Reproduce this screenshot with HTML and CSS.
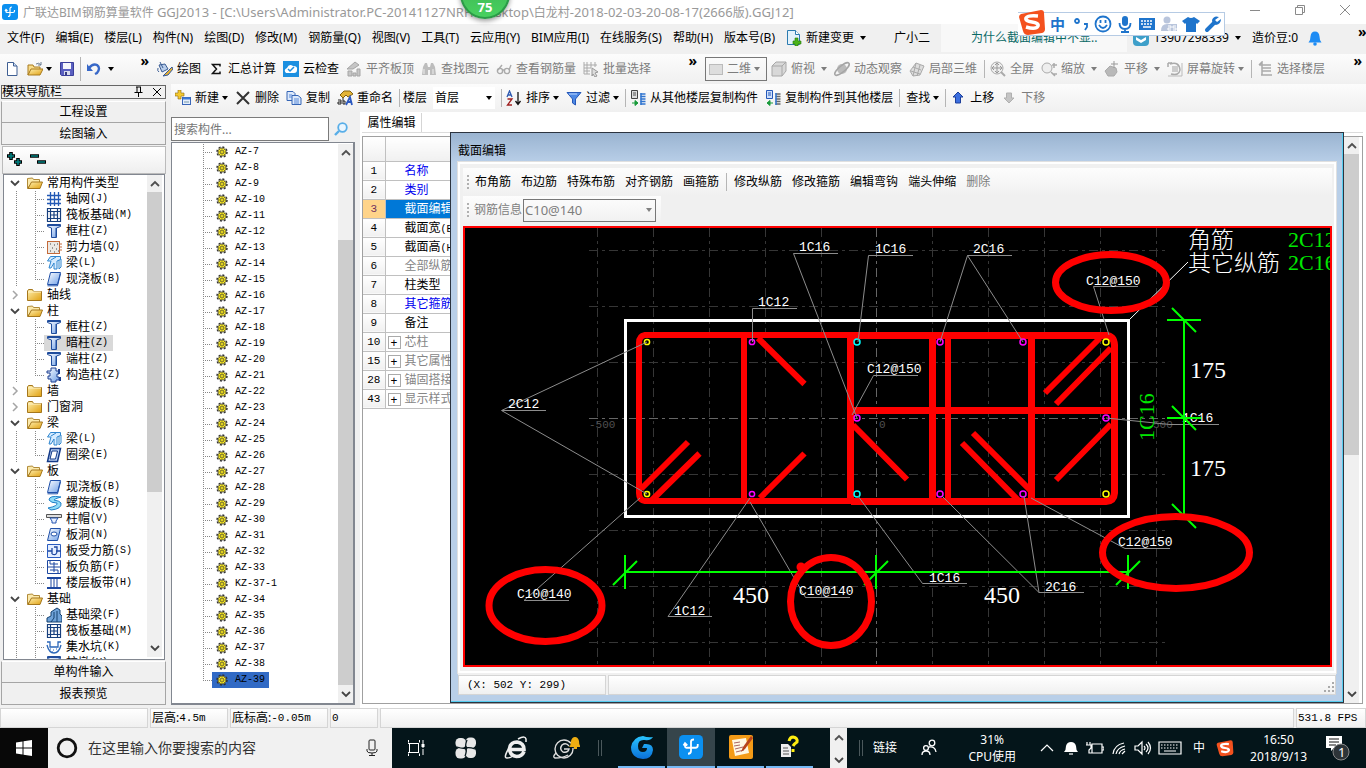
FILE: index.html
```html
<!DOCTYPE html>
<html lang="zh-CN">
<head>
<meta charset="utf-8">
<title>广联达BIM钢筋算量软件 GGJ2013</title>
<link rel="stylesheet" href="styles.css">
</head>
<body>
<svg class="defs" aria-hidden="true">
<defs>
<linearGradient id="gold" x2="1" y2="1"><stop stop-color="#fff0b0"/><stop offset="1" stop-color="#e0a010"/></linearGradient>
<linearGradient id="blue" x2="1" y2="1"><stop stop-color="#fff"/><stop offset="1" stop-color="#6fa0e8"/></linearGradient>
<linearGradient id="flow" x2="0" y2="1"><stop stop-color="#29c5ff"/><stop offset="1" stop-color="#0a6fd8"/></linearGradient>
</defs>
<symbol id="app" viewBox="0 0 16 16"><rect width="16" height="16" rx="3" fill="#0b90f0"/><path d="M8 4v6.500q0 2-2 2M4 6.500v1q0 1 1 1h6q1.500 0 1.500-1.500V6M8 4.500q0-1.500 2-1.500M3 7l1-1.500L5.500 7" fill="none" stroke="#fff" stroke-width="1.200"/></symbol>
<symbol id="page" viewBox="0 0 16 16"><path d="M3.500 1.500h6l3.500 3.500v9.500h-9.500z" fill="#fff" stroke="#3f5f93"/><path d="M9.500 1.500v3.500h3.500" fill="#cfe0f5" stroke="#3f5f93"/></symbol>
<symbol id="open" viewBox="0 0 16 16"><path d="M1 4h5l1 2h6v3H4l-3 5z" fill="#f8dc8a" stroke="#a87b1e"/><path d="M1 14l3-6h12l-3 6z" fill="url(#gold)" stroke="#a87b1e"/><path d="M9 3q3-2 5 1M14 1v3h-3" fill="none" stroke="#6c7f95"/></symbol>
<symbol id="fopen" viewBox="0 0 16 16"><path d="M.5 13.500v-10l5-.5 1 1.500h6v3H5z" fill="#fbe9ab" stroke="#b08a38"/><path d="M1 13.500l3.500-6.500h11l-2.500 6.500z" fill="url(#gold)" stroke="#a5771c"/></symbol>
<symbol id="folder" viewBox="0 0 16 16"><path d="M.5 13.500V4l1-1.500h4l1 2h8v9z" fill="url(#gold)" stroke="#a5771c"/><path d="M1 5h13" stroke="#fff4c8"/></symbol>
<symbol id="save" viewBox="0 0 16 16"><path d="M1.500 1.500h13v13h-12l-1-1z" fill="#5a5fc0" stroke="#3a3f9a"/><path d="M4 2h8v6H4z" fill="#f5f7fc"/><path d="M5 10h6v4H5z" fill="#d8dcee"/><path d="M6 11h2v3H6z" fill="#383c80"/></symbol>
<symbol id="undo" viewBox="0 0 16 16"><path d="M3 7q4-5 8-3 4 3 0 8l-2 1" fill="none" stroke="#3868c8" stroke-width="2.400"/><path d="M1 3v7h6z" fill="#3868c8"/></symbol>
<symbol id="paint" viewBox="0 0 16 16"><path d="M2 4l6-1 3 5-6 3z" fill="#b8cdea" stroke="#3a5c94"/><path d="M3 1l3 6M1 7q-1 3 1 4" stroke="#3a5c94" fill="none"/><path d="M15 6l-6 6-3 3 5-1 5-6z" fill="#e8b030" stroke="#335a9c"/></symbol>
<symbol id="sigma" viewBox="0 0 16 16"><path d="M12 5.500V3.500H4.500l4 4.500-4 4.500H12v-2M4.500 3.500L8.500 8" fill="none" stroke="#111" stroke-width="1.500"/></symbol>
<symbol id="cloud" viewBox="0 0 16 16"><rect width="16" height="16" fill="#1b8fe0"/><path d="M3 12q-3-3 1-5 2-5 6-2 5 0 4 4 0 3-3 3z" fill="#fff"/><path d="M5 8l2 2 4-4" fill="none" stroke="#1b8fe0" stroke-width="1.500"/></symbol>
<symbol id="slab" viewBox="0 0 16 16"><path d="M1 8l8-7 4 3-6 4zM2 10h4v5H2zM7 12h3v3H7zM11 8h3v7h-3z" fill="#c6c6c6" stroke="#a5a5a5"/></symbol>
<symbol id="binoc" viewBox="0 0 16 16"><path d="M2 6l2-4h2l1 4v8H1zM9 6l1-4h2l2 4 1 8H9zM6 6h4v3H6z" fill="#bdbdbd"/><path d="M3 8v5M12 8v5" stroke="#eee"/></symbol>
<symbol id="glasses" viewBox="0 0 16 16"><g fill="none" stroke="#aaa" stroke-width="1.400"><circle cx="4" cy="10" r="2.600"/><circle cx="11" cy="10" r="2.600"/><path d="M2 9l4-5M13 9l2-5M6.500 9h2"/></g></symbol>
<symbol id="batch" viewBox="0 0 16 16"><path d="M1 1v12h6M1 4h13M1 7h7M1 10h6M4 1v12M8 1v6M12 1v5" stroke="#aaa" fill="none"/><path d="M9 7l6 4-3 1 2 3-2 1-2-3-1 2z" fill="#ddd" stroke="#999"/></symbol>
<symbol id="cube" viewBox="0 0 16 16"><path d="M1 5l4-4h10v9l-4 5H1z" fill="#d8d8d8" stroke="#a8a8a8"/><path d="M1 5h10v10M11 5l4-4" fill="none" stroke="#a8a8a8"/></symbol>
<symbol id="orbit" viewBox="0 0 16 16"><circle cx="8" cy="8" r="5" fill="#bbb"/><ellipse cx="8" cy="8" rx="9" ry="3" transform="rotate(-40 8 8)" fill="none" stroke="#a5a5a5" stroke-width="1.500"/></symbol>
<symbol id="local3d" viewBox="0 0 16 16"><path d="M1 10l6-8 8 3-4 9-7 1zM4 6l8 3M7 2l-3 13M11 4L8 15M2 10l9 3" fill="#ddd" stroke="#aaa"/></symbol>
<symbol id="full" viewBox="0 0 16 16"><circle cx="7" cy="7" r="6" fill="#eee" stroke="#aaa"/><path d="M7 2v10M2 7h10M5 4l2-2 2 2M5 10l2 2 2-2M4 5L2 7l2 2M10 5l2 2-2 2" fill="none" stroke="#999"/><path d="M11 11l4 4" stroke="#aaa" stroke-width="2"/></symbol>
<symbol id="zoomi" viewBox="0 0 16 16"><circle cx="6" cy="7" r="5" fill="#eee" stroke="#aaa"/><path d="M10 11l4 4M13 2v5M11 4h5M12 13h4" stroke="#aaa" stroke-width="1.500"/></symbol>
<symbol id="pan" viewBox="0 0 16 16"><path d="M1 10l3-3 2-2 3 1 3 1 1 4-3 4H4z" fill="#b9b9b9" stroke="#aaa"/><path d="M10 0v7M7 3h7" stroke="#999"/></symbol>
<symbol id="rot" viewBox="0 0 16 16"><path d="M1 2h4M1 2v4M3 3q9-3 10 6-1 6-9 4" fill="none" stroke="#aaa" stroke-width="1.500"/><rect x="5" y="5" width="6" height="6" fill="#ccc"/><path d="M1 15h14V2" fill="none" stroke="#bbb"/></symbol>
<symbol id="floors" viewBox="0 0 16 16"><path d="M2 4h12M5 7h9M5 10h9M4 14h11M2 4l3-3v3M5 4v10" stroke="#aaa" stroke-width="1.500" fill="none"/></symbol>
<symbol id="new" viewBox="0 0 16 16"><path d="M3 0h3v3h3v3H6v3H3V6H0V3h3z" fill="#f4c92f" stroke="#8a6a10" stroke-width=".6"/><rect x="7.500" y="7.500" width="8" height="7" fill="#e4eefc" stroke="#3a66b8"/><path d="M8 8.500h7" stroke="#3a78d8" stroke-width="2"/><path d="M9 12h5" stroke="#79a"/></symbol>
<symbol id="del" viewBox="0 0 16 16"><path d="M2 2l12 12M14 2L2 14" stroke="#333" stroke-width="2"/></symbol>
<symbol id="copy" viewBox="0 0 16 16"><path d="M1 1.500h6l2 2v7H1z" fill="#dce9fb" stroke="#3565b5"/><path d="M6 5.500h6l3 2.500v6.500H6z" fill="#dce9fb" stroke="#3565b5"/><path d="M8 9h5M8 11h5M8 13h5M3 5h3M3 7h3" stroke="#5b8ad8"/></symbol>
<symbol id="rename" viewBox="0 0 16 16"><path d="M3 5l4-4h6l3 3-5 3-2-2-3 3z" fill="#e3b436" stroke="#836211"/><path d="M1 10h3v4H1v-2h3M6 8v6h2v-3H6" fill="none" stroke="#222"/><path d="M9 15l4-8 2 8M11 12h4" fill="none" stroke="#2d59c0" stroke-width="1.800"/></symbol>
<symbol id="sort" viewBox="0 0 16 16"><path d="M1 7l2.500-6L6 7M2 5h3" fill="none" stroke="#2d59b0" stroke-width="1.300"/><path d="M1.500 9H6l-4.500 6H6" fill="none" stroke="#a02020" stroke-width="1.300"/><path d="M12 2v12M9.500 11l2.500 3.500L14.500 11" fill="none" stroke="#111" stroke-width="1.300"/></symbol>
<symbol id="filter" viewBox="0 0 16 16"><path d="M1 2.500h14L9.500 9v6l-3-2V9z" fill="#4d88e4" stroke="#2557b8"/><path d="M3 4h8" stroke="#bcd6ff"/></symbol>
<symbol id="cpfrom" viewBox="0 0 16 16"><path d="M1.500.5h6v8h-6z" fill="#ddd" stroke="#444"/><path d="M3 3h3M3 5h3" stroke="#555"/><path d="M2 13h5M5 10.500v5l3-2.500z" fill="#199a3a" stroke="#199a3a"/><path d="M10.500 4h5M10.500 6.500h5M10.500 9h5M10.500 11.500h5M10.500 14h5" stroke="#2f74cf" stroke-width="1.600"/><path d="M11 3v12" stroke="#2f74cf" stroke-width="1.500"/></symbol>
<symbol id="cpto" viewBox="0 0 16 16"><path d="M1.500.5h6v8h-6z" fill="#cfe0fb" stroke="#2558b8"/><path d="M3 3h3M3 5h3" stroke="#2558b8"/><path d="M3 13h5M5 10.500v5L2 13z" fill="#199a3a" stroke="#199a3a"/><path d="M10.500 4h5M10.500 6.500h5M10.500 9h5M10.500 11.500h5M10.500 14h5" stroke="#666" stroke-width="1.600"/><path d="M11 3v12" stroke="#2f74cf" stroke-width="1.500"/></symbol>
<symbol id="up" viewBox="0 0 16 16"><path d="M8 2l5 5h-2.500v6h-5V7H3z" fill="#3c6fe0" stroke="#1d3f9a"/></symbol>
<symbol id="down" viewBox="0 0 16 16"><path d="M8 13L3 8h2.500V3h5v5H13z" fill="#c4c4c4" stroke="#b0b0b0"/></symbol>
<symbol id="chg" viewBox="0 0 16 16"><path d="M1.500.5h8l4 4v10h-12z" fill="#e3f2fb" stroke="#2b7bb0"/><path d="M9.500.5v4h4" fill="#fff" stroke="#2b7bb0"/><path d="M9 8h3v3h3v3h-3v2H9v-2H7v-3h2z" fill="#4bb31b" stroke="#257a0c" stroke-width=".6"/></symbol>
<symbol id="bell" viewBox="0 0 16 16"><path d="M1.500 12.500q2-2 2-6Q4 1.500 8 1.500t4.500 5q0 4 2 6z" fill="#1e8cf4"/><circle cx="8" cy="14" r="1.800" fill="#1e8cf4"/></symbol>
<symbol id="mag" viewBox="0 0 16 16"><circle cx="9.500" cy="6.500" r="4.300" fill="#eaf6ff" stroke="#58aee8" stroke-width="1.800"/><path d="M6 10l-4 4" stroke="#58aee8" stroke-width="2.400"/></symbol>
<symbol id="cdown" viewBox="0 0 12 12"><path d="M2 4l4 4 4-4" fill="none" stroke="#444" stroke-width="1.800"/></symbol>
<symbol id="cright" viewBox="0 0 12 12"><path d="M4 2l4 4-4 4" fill="none" stroke="#a5a5a5" stroke-width="1.500"/></symbol>
<symbol id="cup" viewBox="0 0 12 12"><path d="M2 8l4-4 4 4" fill="none" stroke="#505050" stroke-width="1.800"/></symbol>
<symbol id="grid" viewBox="0 0 16 16"><path d="M4.500 1v14M8.500 1v14M12.500 1v14M1 4.500h14M1 8.500h14M1 12.500h14" stroke="#2359b5" stroke-width="1.300"/></symbol>
<symbol id="raft" viewBox="0 0 16 16"><path d="M1.500 1.500h13v13h-13zM4.500 2v12M11.500 2v12M2 4.500h12M2 11.500h12M8 5v6M5 8h6" fill="none" stroke="#173f7d" stroke-width="1.200"/></symbol>
<symbol id="col" viewBox="0 0 16 16"><path d="M1.500 1.500h13v2l-4 1.500v9.500h-5V5l-4-1.500z" fill="url(#blue)" stroke="#1f4c9c"/><path d="M2 2.500h12M10 5v9" stroke="#1f4c9c"/></symbol>
<symbol id="wall" viewBox="0 0 16 16"><rect x="1.500" y="2.500" width="12" height="12" fill="#ece9e4" stroke="#c46a3a"/><path d="M4 5h1M8 6h1M6 9h1M10 10h1M4 12h1M8 13h1M11 5h1M12 12h1" stroke="#444"/><path d="M13 5h3M13 8h3M13 11h3" stroke="#c46a3a"/></symbol>
<symbol id="beam" viewBox="0 0 16 16"><path d="M1.500 6l3-4.500h10v3L11 6v8H8V8l-3 5H3l2-7z" fill="#d5ebff" stroke="#2f86cf"/><path d="M5 5l5-3M13 5v9l2-2V4" fill="none" stroke="#2f86cf"/></symbol>
<symbol id="plate" viewBox="0 0 16 16"><path d="M4.500 1.500h10l-3 12h-10z" fill="url(#blue)" stroke="#2050a8"/><path d="M1.500 14.800h10l3-12" fill="none" stroke="#2050a8"/></symbol>
<symbol id="ring" viewBox="0 0 16 16"><path d="M4.500 1.500h10l-3 13h-10z" fill="#bcd3f5" stroke="#143a88" stroke-width="1.500"/><path d="M6 4h5.500l-2 8H4z" fill="#fff" stroke="#143a88"/></symbol>
<symbol id="gz" viewBox="0 0 16 16"><path d="M5 1h5v3h3v3h-2v3h2v3h-3v2H5v-3H2v-3h2V6H1V4h4z" fill="url(#blue)" stroke="#1c3f90"/><path d="M13 2v5M14 10v4" stroke="#1c3f90" stroke-width="2"/></symbol>
<symbol id="spiral" viewBox="0 0 16 16"><path d="M15 2Q3 0 3 5q2 3 8 3 1 3-9 5l3 2q11-1 10-7-1-2-7-3 0-1 7-3z" fill="#8fdcf8" stroke="#2080c8"/></symbol>
<symbol id="cap" viewBox="0 0 16 16"><path d="M.5 3.500h15v3H.5z" fill="#ddd" stroke="#555"/><path d="M4 7h8l-2 3v2H6v-2z" fill="#e8f0ff" stroke="#2454b0"/></symbol>
<symbol id="hole" viewBox="0 0 16 16"><path d="M4.500 1.500h10l-3 12h-10z" fill="url(#blue)" stroke="#2050a8"/><ellipse cx="8" cy="7" rx="3" ry="2" fill="#fff" stroke="#2050a8"/></symbol>
<symbol id="force" viewBox="0 0 16 16"><path d="M1.500 1.500h13v13h-13z" fill="#e5efff" stroke="#2a5cc0"/><path d="M2 8h4M10 8h5M6 5v6M6 11q5 2 5-3V4H8" fill="none" stroke="#1d47a0" stroke-width="1.300"/></symbol>
<symbol id="neg" viewBox="0 0 16 16"><path d="M1.500 1.500h13v13h-13z" fill="#fff" stroke="#1d47a0"/><path d="M4 5V2M4 5h8M2 8h12M4 11h8v3M8 3v10" stroke="#1d47a0" fill="none"/></symbol>
<symbol id="band" viewBox="0 0 16 16"><path d="M1 3h14M1 13h14" stroke="#1d47a0" stroke-width="2"/><path d="M5 3v10M11 3v10M8 4v8" stroke="#1d47a0"/></symbol>
<symbol id="fbeam" viewBox="0 0 16 16"><path d="M1 15V11l4-2V5l6-4 3 2v4l2 2v6zM8 5v6l-3 4M11 4v11" fill="#6fa2d8" stroke="#14406f"/></symbol>
<symbol id="pit" viewBox="0 0 16 16"><path d="M1 3h3v5h8V3h3M1 6q2 8 7 8t7-8" fill="none" stroke="#2a66b8" stroke-width="1.300"/><path d="M4 10h1M7 11h1M10 10h1M6 13h1" stroke="#2a66b8"/></symbol>
<symbol id="gear" viewBox="0 0 12 12"><circle cx="6" cy="6" r="5" fill="none" stroke="#333" stroke-width="1.500" stroke-dasharray="2 1.900"/><circle cx="6" cy="6" r="4" fill="#ffee20" stroke="#333" stroke-width=".5"/><path d="M6 1v10M1 6h10M2.500 2.500l7 7M9.500 2.500l-7 7" stroke="#333" stroke-width=".5"/><circle cx="6" cy="6" r="1.500" fill="#ffee20" stroke="#333" stroke-width=".5"/></symbol>
<symbol id="sogou" viewBox="0 0 28 28"><path d="M3 6l20-4q3 0 3 3l1 16q0 3-3 4l-14 2q-4 0-5-4L1 9q0-2 2-3z" fill="#f4511e"/><path d="M20 8q-10-1-12 2-1 3 6 4 7 1 6 4-2 4-12 1" fill="none" stroke="#fff" stroke-width="3.500"/></symbol>
</svg>

<header class="titlebar">
  <svg class="ic"><use href="#app"/></svg>
  <h1>广联达BIM钢筋算量软件 <span>GGJ2013 - [C:\Users\Administrator.PC-20141127NRH\Desktop\</span>白龙村<span>-2018-02-03-20-08-17(2666</span>版<span>).GGJ12]</span></h1>
  <div class="winbtns">
    <button aria-label="最小化"><svg viewBox="0 0 12 12"><path d="M1 6.500h10"/></svg></button>
    <button aria-label="还原"><svg viewBox="0 0 12 12"><path d="M1.500 3.500h7v7h-7zM3.500 3v-1.500h7v7H9"/></svg></button>
    <button aria-label="关闭"><svg viewBox="0 0 12 12"><path d="M1 1l10 10M11 1L1 11"/></svg></button>
  </div>
</header>

<nav class="menubar">
  <button>文件(F)</button><button>编辑(E)</button><button>楼层(L)</button><button>构件(N)</button><button>绘图(D)</button><button>修改(M)</button><button>钢筋量(Q)</button><button>视图(V)</button><button>工具(T)</button><button>云应用(Y)</button><button>BIM应用(I)</button><button>在线服务(S)</button><button>帮助(H)</button><button>版本号(B)</button>
  <button class="change"><svg class="ic"><use href="#chg"/></svg>新建变更<i class="caret"></i></button>
  <button class="user">广小二</button>
  <a class="tip" href="#">为什么截面编辑中不显..</a>
  <button class="phone"><svg class="ic" viewBox="0 0 16 16"><rect width="16" height="16" rx="4" fill="#3e9fc9"/><path d="M3 10l5 3 5-3V7L8 10 3 7z" fill="#fff"/></svg>13907298339<i class="caret"></i></button>
  <button>造价豆:0</button>
  <svg class="ic bell"><use href="#bell"/></svg>
  <span class="more">»</span>
</nav>

<div class="toolbar top">
  <div class="grp files">
    <button aria-label="新建"><svg class="ic"><use href="#page"/></svg></button>
    <button aria-label="打开"><svg class="ic"><use href="#open"/></svg><i class="caret"></i></button>
    <button aria-label="保存"><svg class="ic"><use href="#save"/></svg></button>
    <i class="sep"></i>
    <button aria-label="撤销"><svg class="ic"><use href="#undo"/></svg><i class="caret wide"></i></button>
    <span class="more">»</span>
  </div>
  <div class="grp draw">
    <button><svg class="ic"><use href="#paint"/></svg>绘图</button>
    <button><svg class="ic"><use href="#sigma"/></svg>汇总计算</button>
    <button><svg class="ic"><use href="#cloud"/></svg>云检查</button>
    <button disabled><svg class="ic"><use href="#slab"/></svg>平齐板顶</button>
    <button disabled><svg class="ic"><use href="#binoc"/></svg>查找图元</button>
    <button disabled><svg class="ic"><use href="#glasses"/></svg>查看钢筋量</button>
    <button disabled><svg class="ic"><use href="#batch"/></svg>批量选择</button>
    <span class="more">»</span>
  </div>
  <div class="grp view">
    <button class="combo" disabled><i class="swatch"></i>二维<i class="caret"></i></button>
    <button disabled><svg class="ic"><use href="#cube"/></svg>俯视<i class="caret wide"></i></button>
    <button disabled><svg class="ic"><use href="#orbit"/></svg>动态观察</button>
    <button disabled><svg class="ic"><use href="#local3d"/></svg>局部三维</button>
    <i class="sep"></i>
    <button disabled><svg class="ic"><use href="#full"/></svg>全屏</button>
    <button disabled><svg class="ic"><use href="#zoomi"/></svg>缩放<i class="caret wide"></i></button>
    <button disabled><svg class="ic"><use href="#pan"/></svg>平移<i class="caret wide"></i></button>
    <button disabled><svg class="ic"><use href="#rot"/></svg>屏幕旋转<i class="caret"></i></button>
    <i class="sep"></i>
    <button disabled><svg class="ic"><use href="#floors"/></svg>选择楼层</button>
    <span class="more">»</span>
  </div>
</div>

<main class="work">
  <aside class="modnav">
    <div class="modtitle">模块导航栏
      <svg viewBox="0 0 36 12"><path d="M7 1h5M8 1v5M11.500 1v5M5.500 6.500h8M9.500 7v4M24 2l8 8M32 2l-8 8" fill="none" stroke="#000"/></svg>
    </div>
    <button class="bar">工程设置</button>
    <button class="bar">绘图输入</button>
    <div class="expand"><svg viewBox="0 0 46 20"><path d="M8 3v8M4 7h8M15 9v8M11 13h8M27 7h9M34 13h9" stroke="#000" stroke-width="3.600"/><path d="M8 4v6M5 7h6M15 10v6M12 13h6M28 7h7M35 13h7" stroke="#008080" stroke-width="1.600"/></svg></div>
    <div class="box treebox">
      <ul class="tree">
        <li class="top"><svg class="ch"><use href="#cdown"/></svg><svg class="ic"><use href="#fopen"/></svg>常用构件类型</li>
        <li><svg class="ic"><use href="#grid"/></svg>轴网<small>(J)</small></li>
        <li><svg class="ic"><use href="#raft"/></svg>筏板基础<small>(M)</small></li>
        <li><svg class="ic"><use href="#col"/></svg>框柱<small>(Z)</small></li>
        <li><svg class="ic"><use href="#wall"/></svg>剪力墙<small>(Q)</small></li>
        <li><svg class="ic"><use href="#beam"/></svg>梁<small>(L)</small></li>
        <li class="last"><svg class="ic"><use href="#plate"/></svg>现浇板<small>(B)</small></li>
        <li class="top"><svg class="ch"><use href="#cright"/></svg><svg class="ic"><use href="#folder"/></svg>轴线</li>
        <li class="top"><svg class="ch"><use href="#cdown"/></svg><svg class="ic"><use href="#fopen"/></svg>柱</li>
        <li><svg class="ic"><use href="#col"/></svg>框柱<small>(Z)</small></li>
        <li><span class="cur"><svg class="ic"><use href="#col"/></svg>暗柱<small>(Z)</small></span></li>
        <li><svg class="ic"><use href="#col"/></svg>端柱<small>(Z)</small></li>
        <li class="last"><svg class="ic"><use href="#gz"/></svg>构造柱<small>(Z)</small></li>
        <li class="top"><svg class="ch"><use href="#cright"/></svg><svg class="ic"><use href="#folder"/></svg>墙</li>
        <li class="top"><svg class="ch"><use href="#cright"/></svg><svg class="ic"><use href="#folder"/></svg>门窗洞</li>
        <li class="top"><svg class="ch"><use href="#cdown"/></svg><svg class="ic"><use href="#fopen"/></svg>梁</li>
        <li><svg class="ic"><use href="#beam"/></svg>梁<small>(L)</small></li>
        <li class="last"><svg class="ic"><use href="#ring"/></svg>圈梁<small>(E)</small></li>
        <li class="top"><svg class="ch"><use href="#cdown"/></svg><svg class="ic"><use href="#fopen"/></svg>板</li>
        <li><svg class="ic"><use href="#plate"/></svg>现浇板<small>(B)</small></li>
        <li><svg class="ic"><use href="#spiral"/></svg>螺旋板<small>(B)</small></li>
        <li><svg class="ic"><use href="#cap"/></svg>柱帽<small>(V)</small></li>
        <li><svg class="ic"><use href="#hole"/></svg>板洞<small>(N)</small></li>
        <li><svg class="ic"><use href="#force"/></svg>板受力筋<small>(S)</small></li>
        <li><svg class="ic"><use href="#neg"/></svg>板负筋<small>(F)</small></li>
        <li class="last"><svg class="ic"><use href="#band"/></svg>楼层板带<small>(H)</small></li>
        <li class="top"><svg class="ch"><use href="#cdown"/></svg><svg class="ic"><use href="#fopen"/></svg>基础</li>
        <li><svg class="ic"><use href="#fbeam"/></svg>基础梁<small>(F)</small></li>
        <li><svg class="ic"><use href="#raft"/></svg>筏板基础<small>(M)</small></li>
        <li><svg class="ic"><use href="#pit"/></svg>集水坑<small>(K)</small></li>
        <li><svg class="ic"><use href="#col"/></svg>柱墩<small>(Y)</small></li>
      </ul>
      <div class="scroll"><svg class="ch"><use href="#cup"/></svg><i class="thumb nav"></i><svg class="ch"><use href="#cdown"/></svg></div>
    </div>
    <button class="bar">单构件输入</button>
    <button class="bar">报表预览</button>
  </aside>

  <section class="right">
    <div class="toolbar second">
      <button><svg class="ic"><use href="#new"/></svg>新建<i class="caret"></i></button>
      <button><svg class="ic"><use href="#del"/></svg>删除</button>
      <button><svg class="ic"><use href="#copy"/></svg>复制</button>
      <button><svg class="ic"><use href="#rename"/></svg>重命名</button>
      <i class="sep"></i>
      <label for="floor">楼层</label>
      <span class="pick"><select id="floor"><option>首层</option></select><i class="caret"></i></span>
      <i class="sep"></i>
      <button><svg class="ic"><use href="#sort"/></svg>排序<i class="caret"></i></button>
      <button><svg class="ic"><use href="#filter"/></svg>过滤<i class="caret"></i></button>
      <i class="sep"></i>
      <button><svg class="ic"><use href="#cpfrom"/></svg>从其他楼层复制构件</button>
      <button><svg class="ic"><use href="#cpto"/></svg>复制构件到其他楼层</button>
      <i class="sep"></i>
      <button class="find">查找<i class="caret"></i></button>
      <i class="sep"></i>
      <button><svg class="ic"><use href="#up"/></svg>上移</button>
      <button disabled><svg class="ic"><use href="#down"/></svg>下移</button>
    </div>

    <div class="content">
      <section class="comps">
        <div class="search"><input type="text" placeholder="搜索构件..." aria-label="搜索构件"><button aria-label="搜索"><svg class="ic"><use href="#mag"/></svg></button></div>
        <div class="box listbox">
          <ul class="list">
            <li><svg><use href="#gear"/></svg>AZ-7</li><li><svg><use href="#gear"/></svg>AZ-8</li><li><svg><use href="#gear"/></svg>AZ-9</li><li><svg><use href="#gear"/></svg>AZ-10</li>
            <li><svg><use href="#gear"/></svg>AZ-11</li><li><svg><use href="#gear"/></svg>AZ-12</li><li><svg><use href="#gear"/></svg>AZ-13</li><li><svg><use href="#gear"/></svg>AZ-14</li>
            <li><svg><use href="#gear"/></svg>AZ-15</li><li><svg><use href="#gear"/></svg>AZ-16</li><li><svg><use href="#gear"/></svg>AZ-17</li><li><svg><use href="#gear"/></svg>AZ-18</li>
            <li><svg><use href="#gear"/></svg>AZ-19</li><li><svg><use href="#gear"/></svg>AZ-20</li><li><svg><use href="#gear"/></svg>AZ-21</li><li><svg><use href="#gear"/></svg>AZ-22</li>
            <li><svg><use href="#gear"/></svg>AZ-23</li><li><svg><use href="#gear"/></svg>AZ-24</li><li><svg><use href="#gear"/></svg>AZ-25</li><li><svg><use href="#gear"/></svg>AZ-26</li>
            <li><svg><use href="#gear"/></svg>AZ-27</li><li><svg><use href="#gear"/></svg>AZ-28</li><li><svg><use href="#gear"/></svg>AZ-29</li><li><svg><use href="#gear"/></svg>AZ-30</li>
            <li><svg><use href="#gear"/></svg>AZ-31</li><li><svg><use href="#gear"/></svg>AZ-32</li><li><svg><use href="#gear"/></svg>AZ-33</li><li><svg><use href="#gear"/></svg>KZ-37-1</li>
            <li><svg><use href="#gear"/></svg>AZ-34</li><li><svg><use href="#gear"/></svg>AZ-35</li><li><svg><use href="#gear"/></svg>AZ-36</li><li><svg><use href="#gear"/></svg>AZ-37</li>
            <li><svg><use href="#gear"/></svg>AZ-38</li><li class="last"><span class="sel"><svg><use href="#gear"/></svg>AZ-39</span></li>
          </ul>
          <div class="scroll"><svg class="ch"><use href="#cup"/></svg><i class="thumb tall"></i><svg class="ch"><use href="#cdown"/></svg></div>
        </div>
      </section>

      <section class="props">
        <div class="tabs"><button class="tab">属性编辑</button></div>
        <div class="propbox">
          <table>
            <thead><tr><th></th><th></th></tr></thead>
            <tbody>
              <tr><th>1</th><td class="b">名称</td></tr>
              <tr><th>2</th><td class="b">类别</td></tr>
              <tr class="on"><th>3</th><td>截面编辑</td></tr>
              <tr><th>4</th><td>截面宽<small>(B边)</small></td></tr>
              <tr><th>5</th><td>截面高<small>(H边)</small></td></tr>
              <tr><th>6</th><td class="g">全部纵筋</td></tr>
              <tr><th>7</th><td>柱类型</td></tr>
              <tr><th>8</th><td class="b">其它箍筋</td></tr>
              <tr><th>9</th><td>备注</td></tr>
              <tr class="fold"><th>10</th><td class="g"><button>+</button>芯柱</td></tr>
              <tr class="fold"><th>15</th><td class="g"><button>+</button>其它属性</td></tr>
              <tr class="fold"><th>28</th><td class="g"><button>+</button>锚固搭接</td></tr>
              <tr class="fold"><th>43</th><td class="g"><button>+</button>显示样式</td></tr>
            </tbody>
          </table>
          <div class="scroll"><svg class="ch"><use href="#cup"/></svg><i class="thumb prop"></i><svg class="ch"><use href="#cdown"/></svg></div>
        </div>

        <div class="dialog" role="dialog" aria-label="截面编辑">
          <h2>截面编辑</h2>
          <div class="inner">
            <div class="dbar"><i class="grip"></i>
              <button>布角筋</button><button>布边筋</button><button>特殊布筋</button><button>对齐钢筋</button><button>画箍筋</button><i class="sep"></i><button>修改纵筋</button><button>修改箍筋</button><button>编辑弯钩</button><button>端头伸缩</button><button disabled>删除</button>
            </div>
            <div class="dbar info"><i class="grip"></i>
              <label for="rebar">钢筋信息</label><span class="pick"><select id="rebar" disabled><option>C10@140</option></select><i class="caret"></i></span>
            </div>
            <svg class="canvas" aria-label="截面图">
              <g transform="translate(-465 -228)" fill="none">
                <g stroke="#363636" stroke-dasharray="9 4 3 4">
                  <path d="M597.500 228V668M653.500 228V668M709.500 228V668M765.500 228V668M821.500 228V668M932.500 228V668M988.500 228V668M1044.500 228V668M1100.500 228V668M1156.500 228V668"/>
                  <path d="M589 250.500H1167M589 306.500H1167M589 362.500H1167M589 474.500H1167M589 530.500H1167M589 586.500H1167M589 642.500H1167"/>
                  <path d="M876.500 228V668M589 418.500H1167" stroke="#666"/>
                </g>
                <g class="axis"><text x="589" y="428">-500</text><text x="879" y="428">0</text><text x="1153" y="428">500</text></g>
                <path d="M1129 320L1188 262" stroke="#fff"/>
                <rect x="625.500" y="320.500" width="503" height="196" stroke="#fff" stroke-width="3"/>
                <g stroke="#f00" stroke-width="6">
                  <path d="M851 335H645Q639 336 639 343V493Q639 500 645 501H851M744 338V498"/>
                  <path d="M850.500 332V501M851 335.500H1106Q1114 336 1114.500 345V493Q1114 501 1106 501.500H851M851 410.500H1112M932.500 335V501M1031.500 335V501" stroke-width="7"/>
                  <path d="M948 335V501"/>
                  <path d="M758 338L804.500 384M641 489L688 442M652 500L699.500 453.500M760 498L804.500 453.500M853 425L907 479.500M1100 338L1045 393M1111 348L1056 404M1111 424L1056 480M962 443L1019 501M973 433L1031 491"/>
                </g>
                <g stroke-width="1.500">
                  <g stroke="#ff0"><circle cx="647" cy="342" r="2.600"/><circle cx="647" cy="494" r="2.600"/><circle cx="1106" cy="342" r="3"/><circle cx="1106" cy="494" r="3"/></g>
                  <g stroke="#f0f"><circle cx="752" cy="342" r="2.600"/><circle cx="752" cy="494" r="2.600"/><circle cx="857" cy="418" r="3"/><circle cx="940" cy="342" r="3"/><circle cx="1023" cy="342" r="3"/><circle cx="940" cy="494" r="3"/><circle cx="1023" cy="494" r="3"/><circle cx="1106" cy="418" r="3"/></g>
                  <g stroke="#0ff"><circle cx="857" cy="342" r="3"/><circle cx="857" cy="494" r="3"/></g>
                </g>
                <path stroke="#8c8c8c" d="M647 342L501.500 410.500L647 494M502 410.500H546M857 418L793.500 253.500H838M858 342L868.500 255.500H913M752.500 342V308.500H797M852 415L873.500 375.500H918M940 342L967.500 255.500H1012M967.500 255.500L1023 342M1109 335L1093.500 286.500H1138M1106 418L1170 424.500H1219M1031 498L1125 548.500H1170M942 496L1039 592.500H1084M1024 496L1039 592.500M858 496L922.500 583.500H967M750 498L668 616.500H712M640 498L524 600.500H569M750 502L805.500 597.500H850"/>
                <g class="lab">
                  <text x="508" y="408">2C12</text><text x="799" y="251">1C16</text><text x="875" y="253">1C16</text><text x="758" y="306">1C12</text><text x="867" y="373">C12@150</text><text x="973" y="253">2C16</text><text x="1086" y="285">C12@150</text><text x="1182" y="422">1C16</text><text x="1118" y="546">C12@150</text><text x="1045" y="591">2C16</text><text x="929" y="582">1C16</text><text x="674" y="615">1C12</text><text x="517" y="598">C10@140</text><text x="799" y="595">C10@140</text>
                </g>
                <g stroke="#0f0" stroke-width="2">
                  <path d="M625 572H1128M625 555V589M876 555V589M1128 555V589M613 585L637 561M864 585L888 561M1116 585L1140 561"/>
                  <path d="M1184 320V516M1167 320H1201M1167 418H1201M1172 308L1196 332M1172 406L1196 430M1172 504L1196 528"/>
                </g>
                <g class="dim"><text x="733" y="603">450</text><text x="984" y="603">450</text><text x="1190" y="378">175</text><text x="1190" y="476">175</text></g>
                <g class="leg"><text x="1188" y="248">角筋</text><text x="1188" y="271">其它纵筋</text></g>
                <g class="bar2"><text x="1288" y="247">2C12</text><text x="1288" y="270">2C16</text><text transform="translate(1154 441) rotate(-90)">1C16</text></g>
                <g stroke="#f00" stroke-width="7"><ellipse cx="545.500" cy="605.500" rx="56.500" ry="36"/><ellipse cx="831" cy="601.500" rx="40.500" ry="44"/><ellipse cx="1111" cy="282.500" rx="55.500" ry="28"/><ellipse cx="1176" cy="552.500" rx="73.500" ry="36"/></g>
                <circle cx="801" cy="567" r="4.500" fill="#f00"/>
              </g>
            </svg>
          </div>
          <div class="dstatus"><span>(X: 502 Y: 299)</span><span><svg viewBox="0 0 12 12"><path d="M9 1h2M9 5h2M5 5h2M9 9h2M5 9h2M1 9h2" stroke="#aaa" stroke-width="2"/></svg></span></div>
        </div>
      </section>
    </div>
  </section>
</main>

<footer class="status">
  <span class="s0"></span><span class="s1">层高:<small>4.5m</small></span><span class="s2">底标高:<small>-0.05m</small></span><span class="s3"><small>0</small></span><span class="s4"></span><span class="s5"><small>531.8 FPS</small></span>
</footer>

<div class="taskbar">
  <button class="start" aria-label="开始"><svg viewBox="0 0 16 16"><path d="M0 2.500l6.500-1v6H0zM7.500 1.300L16 0v7.500H7.500zM0 8.500h6.500v6L0 13.500zM7.500 8.500H16V16l-8.500-1.300z" fill="#fff"/></svg></button>
  <label class="cortana"><svg viewBox="0 0 22 22"><circle cx="11" cy="11" r="8.800" fill="none" stroke="#111" stroke-width="2.800"/></svg><input type="text" placeholder="在这里输入你要搜索的内容"><svg class="mic" viewBox="0 0 12 18"><rect x="3" y="1" width="6" height="10" rx="1"/><path d="M1 10v2q0 2 5 2t5-2v-2M6 14v2M3 16.500h6"/></svg></label>
  <button aria-label="任务视图"><svg class="t18" viewBox="0 0 18 18" fill="none" stroke="#fff"><path d="M1 4.500h11M1 13.500h11M2.500 4v10M11.500 4v10M1.500 1v2.500M12.500 1v2.500M1.500 14.500V17M12.500 14.500V17M16 1v3M16 10v6"/><path d="M15 5h2v3h-2z" fill="#fff"/></svg></button>
  <button aria-label="四叶"><svg class="t24" viewBox="0 0 24 24"><g fill="#e8e8e8"><rect x="1.500" y="2" width="10.500" height="10" rx="4.500"/><rect x="11.500" y="1.500" width="10.500" height="10.500" rx="4.500"/><rect x="1.500" y="12" width="10.500" height="10.500" rx="4.500"/><rect x="11.500" y="11.500" width="10.500" height="10.500" rx="4.500"/></g><path d="M12 12q-1-3 1-8M12 12q3-1 9 1M12 12q1 3-1 8M12 12q-3 1-9-1" fill="none" stroke="#04151a" stroke-width="1.300"/></svg></button>
  <button aria-label="IE"><svg class="t24" viewBox="0 0 24 24" fill="none" stroke="#eee"><path d="M20 15.500q-2 5-7.500 5-7-1-7-8 1-6.500 7.500-6.500 7 1 7 7.500H7" stroke-width="3.600"/><path d="M14 3q7-4 8 0v3M5 12q-6 10-2 10 3 0 6-2" stroke-width="1.500"/></svg></button>
  <button aria-label="提醒"><svg class="t28" viewBox="0 0 28 28" fill="none"><g stroke="#ddd" stroke-width="1.400"><circle cx="12" cy="15" r="9" stroke-dasharray="50 5"/><path d="M17 12q-3-4-7-1-3 4 1 7 5 1 6-3h-5M4 19q-4 4-1 5 8 0 13-3"/></g><path d="M17 13q2-2 2-6 1-4 4-4t4 4q0 4 2 6z" fill="#efae12"/><path d="M22 14h3" stroke="#efae12" stroke-width="2"/></svg></button>
  <i class="bars"></i>
  <button class="run" aria-label="浏览器"><svg class="t24" viewBox="0 0 24 24"><path d="M23 2q-3 4-8 3-7-1-7 6 0 6 5 6 4 0 4-4h-5l2-4q9-1 9 6-1 9-10 9Q1 23 1 12 3 2 13 1q5 2 10 1z" fill="url(#flow)"/></svg></button>
  <button class="run act" aria-label="GGJ2013"><svg class="t24"><use href="#app"/></svg></button>
  <button class="run" aria-label="笔记"><svg class="t24" viewBox="0 0 24 24"><rect width="24" height="24" rx="2" fill="#f49b17"/><path d="M3 5l14-2 3 15-14 3z" fill="#fff8e4"/><path d="M5 8l6-1M5 11l6-1M6 14l8-2M7 17l8-2" stroke="#a66"/><path d="M22 1l-8 11-2 5 4-3 8-11z" fill="#b8441c"/></svg></button>
  <button class="run" aria-label="帮助"><svg class="t24" viewBox="0 0 24 24"><path d="M3 9h7l3 3v10H3z" fill="#eee"/><path d="M5 13h5M5 16h6M5 19h6" stroke="#555"/><path d="M11 6q1-4 4-4 5 1 4 5-3 2-4 4M15 14v3" fill="none" stroke="#ffee10" stroke-width="3"/></svg></button>
  <div class="updown"><svg class="ch"><use href="#cup"/></svg><svg class="ch"><use href="#cdown"/></svg></div>
  <i class="bars"></i>
  <a class="link" href="#">链接</a>
  <svg class="people t18" viewBox="0 0 18 18" fill="none" stroke="#fff" stroke-width="1.300"><circle cx="12" cy="4" r="2.800"/><circle cx="6" cy="9" r="2.400"/><path d="M2 16q0-4 4-4t4 4M9 8q6-1 7 5"/></svg>
  <div class="cpu">31%<br>CPU使用</div>
  <div class="tray">
    <svg class="t18" viewBox="0 0 18 18"><path d="M3 12l6-6 6 6" class="ln"/></svg>
    <svg class="t18" viewBox="0 0 18 18"><path d="M2 13q2-2 2-6 1-4 5-4t5 4q0 4 2 6z" fill="#fff"/><path d="M7 15h4" class="ln"/></svg>
    <svg class="t18" viewBox="0 0 18 18"><path d="M6 5h10v9H6zM16 8h2v3h-2M1 3v3M4 3v3M0 6h5v3l-2 2v3h3" class="ln"/></svg>
    <svg class="t18" viewBox="0 0 18 18"><path d="M3 15Q4 6 14 4M6 15q1-6 9-8M9 15q1-4 6-5M12 15l3-3" class="ln"/></svg>
    <svg class="t18" viewBox="0 0 18 18"><path d="M1 7h3l4-4v12l-4-4H1zM10 7q2 2 0 4M12 5q4 4 0 8M14 3q5 6 0 12" class="ln"/></svg>
    <svg class="kb" viewBox="0 0 24 16"><path d="M1 2h22v12H1zM6 11h12" class="ln"/><path d="M3 5h18M3 8h18" class="ln" stroke-dasharray="1.500 1.500"/></svg>
    <span>中</span>
    <svg class="t18"><use href="#sogou"/></svg>
  </div>
  <div class="clock">16:50<br>2018/9/13</div>
  <svg class="note" viewBox="0 0 26 26"><path d="M1 1h16v12h-8l-3 3v-3H1z" fill="#fff"/><path d="M4 4h10M4 7h10M4 10h7" stroke="#111"/><circle cx="16" cy="17" r="8" fill="#2d3438" stroke="#888"/><text x="13" y="22">1</text></svg>
</div>

<div class="ball">75</div>
<div class="ime">
  <svg class="logo"><use href="#sogou"/></svg><span>中</span>
  <svg viewBox="0 0 18 18"><circle cx="5" cy="6" r="2" class="st"/><path d="M12 9h3v3l-2 3" class="st"/></svg>
  <svg viewBox="0 0 18 18"><circle cx="9" cy="9" r="7.500" class="st"/><path d="M5 10q4 6 8 0M6.500 5v3M11.500 5v3" class="st"/></svg>
  <svg viewBox="0 0 18 18"><rect x="6" y="1" width="6" height="10" rx="3" class="fl"/><path d="M3.500 8q0 6 5.500 6t5.500-6M9 14v3M5 17h8" class="st"/></svg>
  <svg viewBox="0 0 18 18"><path d="M1 3h16v12H1z" class="fl"/><path d="M3 6h12M3 9h12" stroke="#fff" stroke-width="1.500" stroke-dasharray="2 1"/><path d="M5 12h8" stroke="#fff" stroke-width="1.500"/></svg>
  <svg viewBox="0 0 18 18"><circle cx="7" cy="5" r="3.500" fill="#b9c5dc"/><path d="M1 16q0-7 6-7h10v7z" fill="#b9c5dc"/><path d="M8 11h3v2H8v2h3M16 11h-3v2h3v2h-3" stroke="#fff" fill="none"/></svg>
  <svg viewBox="0 0 18 18"><path d="M6 2q3 2 6 0l6 4-3 3-1-1v9H4V8L3 9 0 6z" class="fl"/></svg>
  <svg viewBox="0 0 18 18"><path d="M3 15l7-7" stroke="#1e74cc" stroke-width="4" stroke-linecap="round"/><path d="M15 2q-5-2-7 3 0 4 4 5 5-1 5-6l-4 3-2-2z" class="fl"/></svg>
</div>
</body>
</html>
```
FILE: styles.css
```css
* { box-sizing: border-box; }
body {
  margin: 0; height: 100vh; overflow: hidden; position: relative;
  display: flex; flex-direction: column; background: #f0f0f0; color: #000;
  font: 12px/16px "Noto Sans", "Noto Sans CJK SC", sans-serif;
}
button, input, select { font: inherit; color: inherit; background: none; border: 0; margin: 0; padding: 0; }
button { display: flex; align-items: center; white-space: nowrap; }
button:disabled, select:disabled { color: #7d7d7d; opacity: 1; }
ul { list-style: none; margin: 0; padding: 0; }
a { text-decoration: none; color: inherit; }
svg { display: block; flex: none; }
small { font: 10px/16px "Liberation Mono", monospace; }
.defs { position: absolute; width: 0; height: 0; }
.ic { width: 16px; height: 16px; }
.ch { width: 12px; height: 12px; }
.caret { flex: none; width: 9px; height: 4px; display: flex; justify-content: flex-end; }
.caret::before { content: ""; border: 3px solid transparent; border-top: 4px solid currentColor; border-bottom: 0; }
.caret.wide { width: 12px; }
.sep { flex: none; width: 1px; height: 18px; background: #b5b5b5; }
.more { font: bold 14px/12px "Noto Sans", sans-serif; align-self: flex-start; }

.titlebar { flex: none; height: 24px; background: #fff; display: flex; align-items: center; padding-left: 2px; }
.titlebar h1 { margin: 0 0 0 5px; font-size: 12px; font-weight: 400; color: #999; white-space: nowrap; flex: 1; }
.titlebar h1 span { font-size: 13px; }
.winbtns { display: flex; gap: 33px; padding: 0 15px 4px 0; }
.winbtns svg { width: 12px; height: 12px; fill: none; stroke: #8a8a8a; }

.menubar { flex: none; height: 30px; display: flex; align-items: center; gap: 11px; padding: 0 2px 2px 7px; }
.menubar .ic { margin-right: 4px; }
.menubar .change .caret, .menubar .phone .caret { width: 12px; }
.menubar .user { margin: 0 0 0 17px; }
.menubar .tip { margin-left: auto; color: #0a6a66; background: #f8f8f8; padding: 4px 30px; line-height: 20px; white-space: nowrap; }
.menubar .phone { margin-left: -5px; }
.menubar .bell { margin: 0 30px 0 -2px; }
.menubar .more { margin: 2px 0 0 -6px; }

.toolbar { flex: none; display: flex; align-items: center; background: linear-gradient(#fcfcfc, #f0f0f0); }
.toolbar.top { height: 30px; }
.toolbar.top .grp { display: flex; align-items: center; gap: 7px; height: 28px; }
.toolbar button { gap: 4px; }
.toolbar button .caret { margin-left: -4px; }
.toolbar .files { width: 153px; padding-left: 4px; gap: 9px; }
.toolbar .files .sep { height: 24px; margin: 0 -2px; }
.toolbar .files .more, .toolbar .draw .more, .toolbar .view .more { margin-left: auto; }
.toolbar .files .more, .toolbar .draw .more { margin-right: 4px; }
.toolbar .draw { width: 548px; padding-left: 4px; }
.toolbar .view { flex: 1; padding: 0 4px; }
.toolbar .view .sep { margin: 0 -2px 0 0; }
.toolbar .combo { width: 62px; height: 24px; border: 1px solid #777; padding: 0 3px; margin-right: -3px; }
.swatch { width: 14px; height: 11px; border: 1px solid #bbb; background: #ddd; }
.toolbar.second { height: 28px; gap: 7px; padding-left: 4px; }
.toolbar.second .sep { margin: 0 -3px 0 -1px; }
.toolbar.second label { margin: 0 -1px; }
.toolbar.second .find { margin-left: 2px; }
.pick { position: relative; display: flex; align-items: center; }
.pick select { appearance: none; width: 100%; opacity: 1; }
.pick .caret { position: absolute; right: 3px; pointer-events: none; }
.second .pick { width: 62px; height: 22px; background: #fff; }
.second .pick select { padding-left: 2px; height: 22px; }

.work { flex: 1; min-height: 0; display: flex; gap: 5px; }
.modnav { flex: none; width: 166px; padding: 1px 0 3px 1px; display: flex; flex-direction: column; }
.modtitle { height: 14px; line-height: 12px; margin-bottom: 2px; border: 1px solid #666; display: flex; justify-content: space-between; align-items: center; }
.modtitle svg { width: 36px; height: 12px; }
.bar { flex: none; height: 22px; justify-content: center; border: 1px solid #a5a5a5; border-top-color: #fff; background: #f0f0f0; }
.bar + .bar { border-top: 0; }
.expand { flex: none; height: 28px; margin: 1px 0 0 1px; padding-top: 2px; border: 1px solid #bbb; background: linear-gradient(#fff, #eee); }
.expand svg { width: 46px; height: 20px; }
.box { background: #fff; border: 1px solid #828790; display: flex; flex: 1; min-height: 0; overflow: hidden; }
.treebox { margin: 0 1px 1px 2px; padding: 0 2px 2px 0; }
.scroll { flex: none; width: 15px; background: #f0f0f0; display: flex; flex-direction: column; align-items: center; padding: 3px 0; }
.scroll .ch:last-child { margin-top: auto; }
.thumb { width: 100%; background: #cdcdcd; margin-top: 2px; }
.thumb.nav { height: 300px; }
.thumb.tall { height: 445px; margin-top: 81px; }
.thumb.prop { height: 301px; }
.tree { flex: 1; min-width: 0; }
.tree li {
  height: 16px; padding-left: 42px; display: flex; align-items: center; white-space: nowrap;
  background:
    repeating-linear-gradient(#888 0 1px, #fff0 1px 2px) 12px 0 / 1px 16px no-repeat,
    repeating-linear-gradient(#888 0 1px, #fff0 1px 2px) 31px 0 / 1px 16px no-repeat,
    repeating-linear-gradient(90deg, #888 0 1px, #fff0 1px 2px) 31px 8px / 10px 1px no-repeat;
}
.tree li.last { background-size: 1px 16px, 1px 8px, 10px 1px; }
.tree li .ic { margin-right: 4px; }
.tree li.top { padding-left: 5px; background: none; }
.tree li.top .ch { margin-right: 6px; }
.cur { display: flex; align-items: center; background: #d9d9d9; margin-left: -2px; padding: 0 5px 0 2px; }

.right { flex: 1; min-width: 0; display: flex; flex-direction: column; }
.content { flex: 1; min-height: 0; display: flex; gap: 5px; }
.comps { flex: none; width: 184px; padding: 5px 0 3px; display: flex; flex-direction: column; }
.search { display: flex; margin-bottom: 1px; }
.search input { width: 158px; height: 24px; border: 1px solid #7a7a7a; background: #fff; padding: 0 2px; }
.search input::placeholder { color: #777; opacity: 1; }
.search button { padding-left: 4px; }
.listbox { padding-top: 1px; border-width: 1px 2px 2px 1px; }
.list { flex: 1; font: 10px/16px "Liberation Mono", monospace; }
.list li {
  height: 16px; padding-left: 44px; display: flex; align-items: center;
  background:
    repeating-linear-gradient(#888 0 1px, #fff0 1px 2px) 31px 0 / 1px 16px no-repeat,
    repeating-linear-gradient(90deg, #888 0 1px, #fff0 1px 2px) 31px 8px / 10px 1px no-repeat;
}
.list li.last { background-size: 1px 8px, 10px 1px; }
.list svg { width: 12px; height: 12px; margin-right: 7px; }
.sel { display: flex; align-items: center; background: #316ac5; margin-left: -4px; padding: 0 4px; }

.props { flex: 1; min-width: 0; position: relative; display: flex; flex-direction: column; background: #fff; padding: 1px 3px 4px 2px; }
.tabs { height: 20px; border-bottom: 1px solid #dcdcdc; display: flex; }
.tab { width: 60px; justify-content: center; border-right: 1px solid #d5d5d5; }
.propbox { flex: 1; margin-top: 3px; border: 1px solid #a0a0a0; display: flex; justify-content: space-between; padding-right: 3px; }
.propbox table { border-collapse: collapse; align-self: flex-start; width: 400px; table-layout: fixed; }
.propbox th { width: 22px; padding: 0; font: 11px/18px "Liberation Mono", monospace; background: linear-gradient(#fff, #f0f0f0); border: 1px solid #c0c0c0; border-left: 0; }
.propbox thead th { height: 24px; border-top: 0; }
.propbox td { height: 19px; padding: 0 0 0 19px; line-height: 18px; border: 1px solid #c0c0c0; white-space: nowrap; }
.propbox td small { line-height: 10px; }
.propbox th + th { width: auto; }
.propbox .b { color: #0000f0; }
.propbox .g { color: #868686; }
.on th { background: #ffd48a; color: #703060; }
.propbox .on td { background: #0078d7; color: #fff; }
.propbox .fold td { padding-left: 2px; }
.fold button { display: inline-block; width: 13px; height: 13px; line-height: 11px; border: 1px solid #aaa; color: #000; margin-right: 4px; vertical-align: middle; }

.dialog {
  position: absolute; left: 90px; top: 20px; right: 22px; bottom: 5px;
  display: flex; flex-direction: column; padding: 0 7px 7px 7px;
  background: linear-gradient(#9ab4d1, #b9cfe8 30px); border: 1px solid #2c3440; box-shadow: inset -1px -1px #56cdf0;
}
.dialog h2 { flex: none; margin: 0; height: 29px; padding-top: 10px; font-size: 12px; font-weight: 400; }
.inner { flex: 1; min-height: 0; display: flex; flex-direction: column; background: #f0f0f0; border: 1px solid #fff; outline: 1px solid #e0e0e0; padding: 5px 3px 5px 4px; box-shadow: inset 0 0 0 1px #fff; }
.dbar { flex: none; height: 28px; display: flex; align-items: center; gap: 10px; background: linear-gradient(#fdfdfd, #f0f0f0); }
.dbar.info { width: 198px; gap: 0; margin-bottom: 2px; color: #808080; }
.grip { flex: none; width: 2px; height: 14px; margin-left: 4px; background: repeating-linear-gradient(#b0b0b0 0 2px, #fff0 2px 4px); }
.dbar .grip { margin-right: -4px; }
.dbar.info .grip { margin-right: 5px; }
.dbar .sep { margin: 0 -3px; }
.info .pick { width: 133px; height: 23px; border: 1px solid #777; margin-left: 1px; }
.info select { padding-left: 1px; font-size: 13px; }
.canvas { flex: 1; min-height: 0; width: 100%; background: #000; border: 2px solid #f00; overflow: hidden; }
.lab { font: 13px "Liberation Mono", monospace; fill: #fff; }
.axis { font: 11px "Liberation Mono", monospace; fill: #505050; }
.dim { font: 24px "Liberation Serif", serif; fill: #fff; }
.leg { font: 300 23px "Noto Sans CJK SC", sans-serif; fill: #fff; }
.bar2 { font: 22px "Liberation Serif", serif; fill: #00e800; }
.dstatus { flex: none; height: 22px; display: flex; gap: 2px; padding-top: 2px; background: #f0f0f0; font: 11px/16px "Liberation Mono", monospace; }
.dstatus span { width: 148px; border: 1px solid #d5d5d5; background: linear-gradient(#fff, #f0f0f0); padding-left: 8px; display: flex; align-items: center; }
.dstatus span + span { flex: 1; justify-content: flex-end; align-items: flex-end; }
.dstatus svg { width: 12px; height: 12px; }

.status { flex: none; height: 20px; display: flex; gap: 2px; }
.status span { border: 1px solid #d5d5d5; background: linear-gradient(#fff, #f0f0f0); padding-left: 1px; line-height: 18px; display: flex; align-items: center; }
.status small { font-size: 11px; }
.s0 { width: 148px; }
.s1 { width: 78px; }
.s2 { width: 98px; }
.s3 { width: 48px; }
.s4 { flex: 1; }
.s5 { width: 70px; }

.taskbar { flex: none; height: 40px; background: #04151a; color: #fff; display: flex; align-items: center; }
.taskbar > button { width: 48px; height: 40px; margin-right: 2px; justify-content: center; }
.taskbar .start { background: #080808; margin: 0; }
.start svg { width: 16px; height: 16px; }
.cortana { width: 344px; height: 40px; background: #f1f1f1; display: flex; align-items: center; padding: 0 14px 0 8px; color: #333; font-size: 14px; }
.cortana svg { width: 22px; height: 22px; margin-right: 10px; }
.cortana input { flex: 1; min-width: 0; }
.cortana input::placeholder { color: #333; opacity: 1; }
.cortana .mic { width: 12px; height: 18px; margin: 0; fill: none; stroke: #222; }
.t18 { width: 18px; height: 18px; }
.t24 { width: 24px; height: 24px; }
.t28 { width: 28px; height: 28px; }
.bars { width: 4px; height: 16px; border: 1px solid #4b585c; border-width: 0 1px; margin: 0 16px 0 6px; }
.taskbar > .run { width: 47px; border-bottom: 2px solid #76b9f5; }
.taskbar > .act { width: 48px; background: #36454b; }
.updown { width: 17px; height: 40px; margin: 0 12px 0 15px; background: #f0f0f0; display: flex; flex-direction: column; justify-content: space-between; align-items: center; padding: 4px 0 2px; }
.updown + .bars { margin: 0 10px 0 0; }
.people { margin: 0 0 0 23px; }
.cpu, .clock { text-align: center; line-height: 17px; white-space: nowrap; }
.cpu { margin: 0 22px 0 auto; }
.tray { display: flex; align-items: center; gap: 6px; }
.tray span { margin: 0 5px; }
.kb { width: 24px; height: 16px; }
.ln { fill: none; stroke: #fff; stroke-width: 1.200; }
.clock { margin: 0 18px 0 16px; }
.note { width: 26px; height: 26px; margin-right: 15px; }
.note text { font: 13px "Noto Sans", sans-serif; fill: #fff; }

.ball { position: absolute; left: 460px; top: -31px; width: 50px; height: 50px; border-radius: 50%; background: linear-gradient(#3cae4e, #48d160); border: 2px solid #2c9a48; box-shadow: 0 2px 5px #0006; color: #fff; font-weight: 700; font-size: 13px; text-align: center; padding-top: 28px; }
.ime { position: absolute; left: 1018px; top: 12px; width: 207px; height: 24px; background: #fff; border: 1px solid #b6cbe4; border-left: 0; display: flex; align-items: center; gap: 4px; }
.ime svg { width: 18px; height: 18px; }
.ime .logo { width: 28px; height: 28px; margin-top: -4px; }
.ime span { font-weight: 700; font-size: 15px; color: #1e74cc; width: 18px; }
.st { fill: none; stroke: #1e74cc; stroke-width: 1.800; }
.fl { fill: #1e74cc; }
```
